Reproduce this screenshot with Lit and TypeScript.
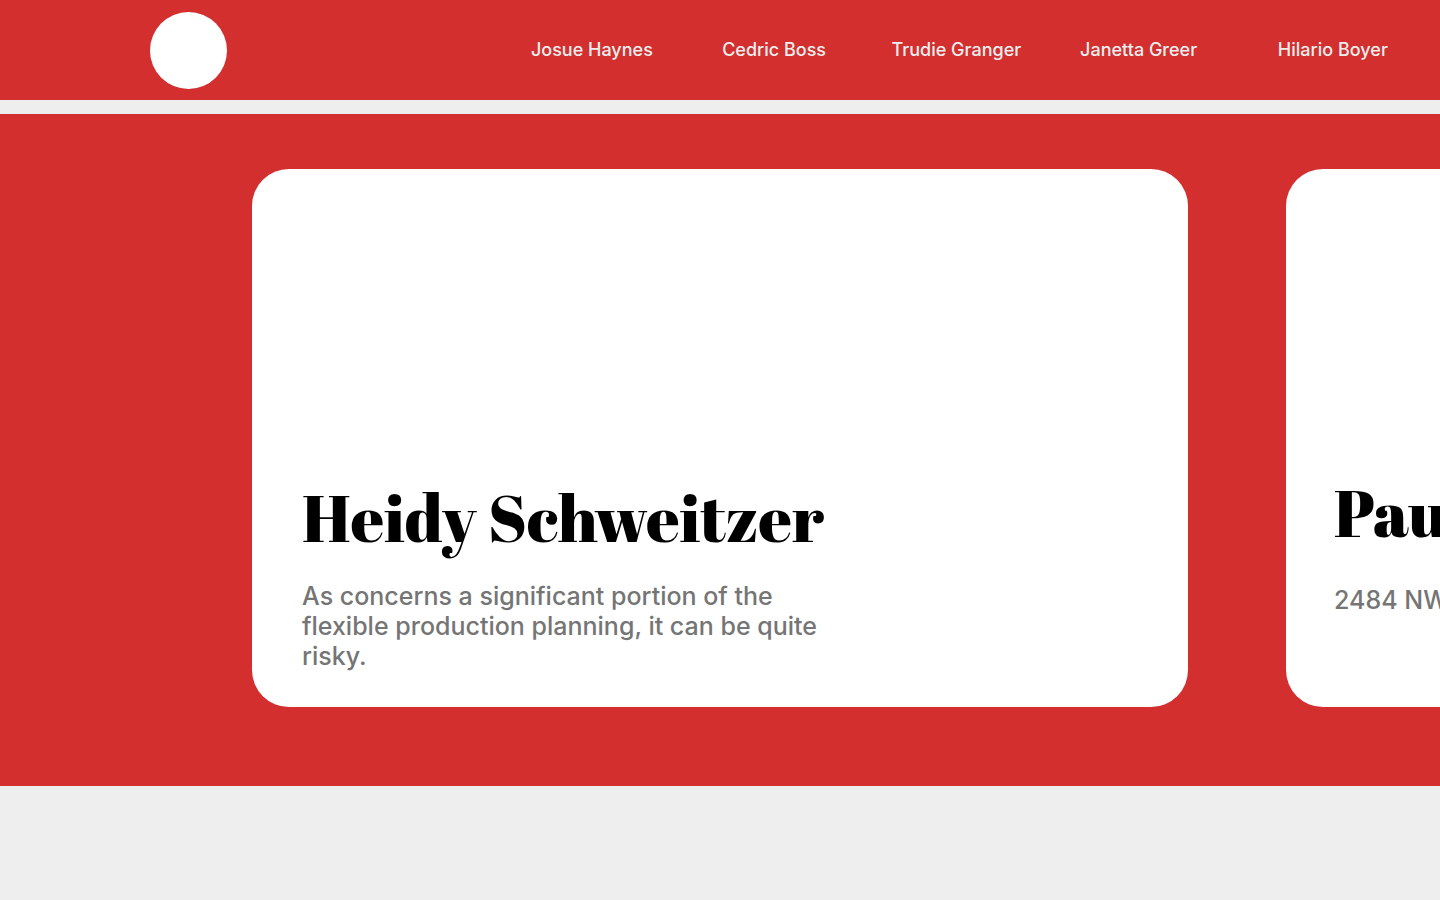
import { LitElement, html, css } from "lit";
import { customElement } from "lit/decorators.js";

interface Slide {
  title: string;
  text: string;
  kind: string;
}

@customElement("app-root")
export class AppRoot extends LitElement {
  static styles = css`
    :host {
      display: block;
      min-height: 100vh;
      overflow-x: hidden;
      background: #eeeeee;
      font-family: Inter, "Liberation Sans", sans-serif;
      font-weight: 500;
    }
    .header {
      display: flex;
      align-items: center;
      justify-content: space-between;
      height: 100px;
      padding-left: 150px;
      margin-bottom: 14px;
      background: #d32f2f;
    }
    .logo {
      width: 77px;
      height: 77px;
      border-radius: 50%;
      background: #ffffff;
    }
    .nav {
      display: grid;
      grid-template-columns: repeat(4, 182fr) 206fr;
      width: 72.5%;
      padding-right: 4px;
    }
    .link {
      color: #eeeeee;
      font-size: 18px;
      line-height: 24px;
      text-align: center;
      text-decoration: none;
      white-space: nowrap;
    }
    .carousel {
      display: flex;
      gap: 98px;
      padding: 55px 0 79px 17.5%;
      overflow: hidden;
      background: #d32f2f;
    }
    .card {
      box-sizing: border-box;
      display: flex;
      flex: 0 0 65vw;
      flex-direction: column;
      justify-content: flex-end;
      min-height: 538px;
      padding: 36px 48px;
      border-radius: 37px;
      background: #ffffff;
    }
    .lead {
      padding-left: 50px;
    }
    .title {
      margin: 0 0 19px;
      color: #000000;
      font-family: "Abril Fatface", "Liberation Serif", serif;
      font-size: 65px;
      font-weight: 400;
      line-height: 90px;
      white-space: nowrap;
    }
    .text {
      max-width: 530px;
      min-height: 90px;
      margin: 0;
      color: #757575;
      font-size: 25px;
      line-height: 30px;
    }
    .address .title {
      margin-bottom: 28px;
    }
    .address .text {
      min-height: 86px;
    }
  `;

  private links = [
    "Josue Haynes",
    "Cedric Boss",
    "Trudie Granger",
    "Janetta Greer",
    "Hilario Boyer",
  ];

  private slides: Slide[] = [
    {
      title: "Heidy Schweitzer",
      text: "As concerns a significant portion of the flexible production planning, it can be quite risky.",
      kind: "lead",
    },
    { title: "Pau", text: "2484 NW", kind: "address" },
  ];

  render() {
    return html`
      <header class="header">
        <div class="logo"></div>
        <nav class="nav">
          ${this.links.map((l) => html`<a class="link" href="#">${l}</a>`)}
        </nav>
      </header>
      <main class="carousel">
        ${this.slides.map(
          (s) => html`
            <article class="card ${s.kind}">
              <h2 class="title">${s.title}</h2>
              <p class="text">${s.text}</p>
            </article>
          `
        )}
      </main>
    `;
  }
}
